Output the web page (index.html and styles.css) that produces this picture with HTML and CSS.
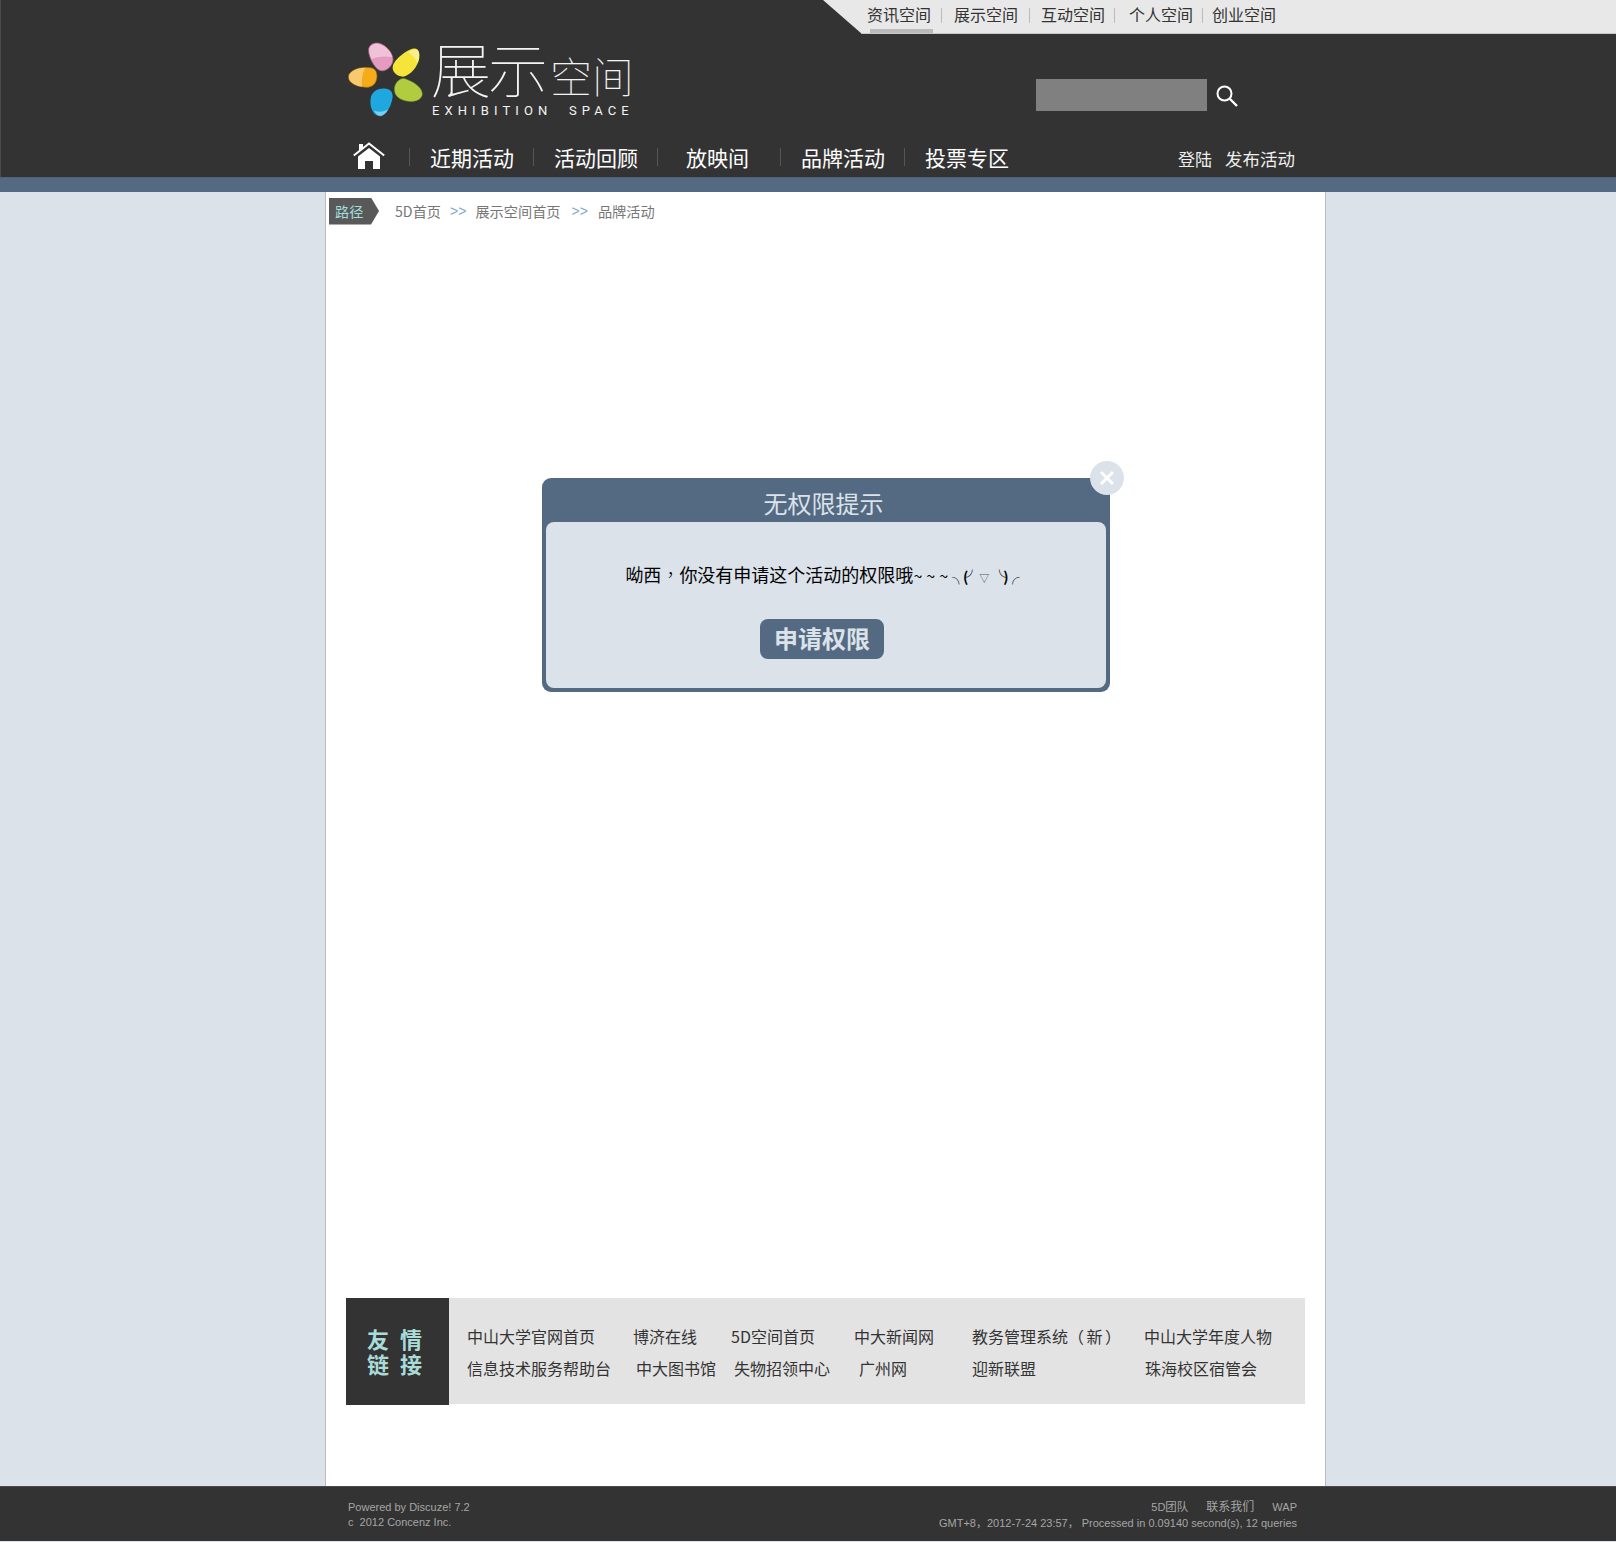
FILE: index.html
```html
<!DOCTYPE html>
<html lang="zh-CN">
<head>
<meta charset="utf-8">
<title>展示空间</title>
<link rel="stylesheet" href="styles.css">
</head>
<body>
<header class="header">
  <div class="topbar">
    <nav class="toplinks">
      <a class="toplink current">资讯空间</a><i class="topsep s1"></i>
      <a class="toplink">展示空间</a><i class="topsep s2"></i>
      <a class="toplink">互动空间</a><i class="topsep s3"></i>
      <a class="toplink">个人空间</a><i class="topsep s4"></i>
      <a class="toplink">创业空间</a>
    </nav>
  </div>
  <div class="brand">
    <div class="logo">
      <svg class="petals" viewBox="27 38 222 221" width="75" height="75" aria-hidden="true">
        <path fill="#e59abf" stroke="#a8648c" stroke-width="2" d="M88 62C88 45 105 37 122 42C145 50 162 75 160 92C158 112 135 127 122 122C108 118 88 85 88 62Z"/>
        <path fill="#f0c2d8" d="M90 62C90 47 105 40 122 44C140 50 154 66 158 82C135 78 110 82 97 88C92 78 90 70 90 62Z"/>
        <path fill="#f5e53b" d="M160 108C165 90 200 60 222 57C236 55 240 70 238 85C235 110 210 138 190 140C172 140 155 125 160 108Z"/>
        <path fill="#f8ef8a" d="M205 68C215 60 232 54 237 68C239 78 236 92 232 100C228 88 218 76 205 68Z"/>
        <path fill="#f5ab1a" stroke="#7a5a20" stroke-width="2" d="M28 138C32 122 60 110 90 113C108 114 113 125 113 140C112 160 100 172 80 172C55 170 25 160 28 138Z"/>
        <path fill="#f8c96f" d="M30 138C34 124 55 114 78 114C70 130 66 150 68 170C50 166 27 156 30 138Z"/>
        <path fill="#b2cc3f" stroke="#6f8a2a" stroke-width="1.5" d="M165 170C170 152 185 143 195 146C215 152 248 170 247 192C246 208 225 216 205 213C185 210 160 200 165 170Z"/>
        <path fill="#1fa7df" d="M94 205C96 185 115 173 135 175C152 176 160 185 159 200C157 220 145 250 125 257C105 260 90 235 94 205Z"/>
        <path fill="#7fcdec" d="M104 240C118 246 132 246 146 236C140 248 133 254 125 256C116 257 109 250 104 240Z"/>
      </svg>
      <div class="wordmark">
        <div class="wordmark-cn"><span class="wm-big">展示</span><span class="wm-small">空间</span></div>
        <div class="wordmark-en">EXHIBITION&nbsp;&nbsp;SPACE</div>
      </div>
    </div>
    <div class="search">
      <div class="search-box"></div>
      <svg class="search-icon" viewBox="0 0 22 22" width="22" height="22" aria-hidden="true">
        <circle cx="8.5" cy="8.5" r="7" fill="none" stroke="#fff" stroke-width="2"/>
        <path d="M13.5 13.5L21 21" stroke="#fff" stroke-width="2.4" fill="none"/>
      </svg>
    </div>
  </div>
  <nav class="nav">
    <a class="home" aria-label="首页">
      <svg viewBox="0 0 32 27" width="32" height="27" aria-hidden="true">
        <path d="M0.8 13.5L16 1.5L31.2 13.5" fill="none" stroke="#fff" stroke-width="2"/>
        <path d="M5 14.5L16 6L27 14.5V27H20V19H12V27H5Z" fill="#fff"/>
        <path d="M6 2H10V5.5L6 8.5Z" fill="#fff"/>
      </svg>
    </a>
    <i class="navsep"></i>
    <a class="navitem">近期活动</a><i class="navsep"></i>
    <a class="navitem">活动回顾</a><i class="navsep"></i>
    <a class="navitem spaced">放映间</a><i class="navsep"></i>
    <a class="navitem">品牌活动</a><i class="navsep"></i>
    <a class="navitem">投票专区</a>
    <div class="navuser"><a class="login">登陆</a><a>发布活动</a></div>
  </nav>
  <div class="strip"></div>
</header>
<main class="main">
  <div class="crumbs">
    <span class="crumb-tag">路径</span>
    <a class="crumb first">5D首页</a><span class="crumb-arrow">&gt;&gt;</span>
    <a class="crumb">展示空间首页</a><span class="crumb-arrow later">&gt;&gt;</span>
    <a class="crumb">品牌活动</a>
  </div>
  <section class="dialog">
    <button class="dialog-close" aria-label="关闭">
      <svg viewBox="0 0 16 16" width="16" height="16" aria-hidden="true"><path d="M2 2L14 14M14 2L2 14" stroke="#fff" stroke-width="3"/></svg>
    </button>
    <h2 class="dialog-title">无权限提示</h2>
    <div class="dialog-body">
      <p class="dialog-msg">呦西<span class="tc comma" lang="zh-TW">，</span>你没有申请这个活动的权限哦<span class="tilde">~~~</span><span class="kao">╮(╯<span class="kao-tri">▽</span>╰)╭</span></p>
      <a class="dialog-btn">申请权限</a>
    </div>
  </section>
  <section class="links">
    <h3 class="links-head">友 情<br>链 接</h3>
    <div class="links-grid">
      <a>中山大学官网首页</a><a>博济在线</a><a>5D空间首页</a><a>中大新闻网</a><a>教务管理系统<span class="tc paren" lang="zh-TW">（新）</span></a><a>中山大学年度人物</a>
      <a>信息技术服务帮助台</a><a class="nudge">中大图书馆</a><a class="nudge">失物招领中心</a><a class="nudge-more">广州网</a><a>迎新联盟</a><a class="nudge-less">珠海校区宿管会</a>
    </div>
  </section>
</main>
<footer class="footer">
  <div class="foot-left">
    <div>Powered by Discuze! 7.2</div>
    <div>c&nbsp;&nbsp;2012 Concenz Inc.</div>
  </div>
  <div class="foot-right">
    <div class="foot-links"><a>5D<span class="foot-cjk tight">团队</span></a><a class="foot-cjk">联系我们</a><a>WAP</a></div>
    <div>GMT+8，2012-7-24 23:57， Processed in 0.09140 second(s), 12 queries</div>
  </div>
</footer>
</body>
</html>
```
FILE: styles.css
```css
* { box-sizing: border-box; }
html, body { margin: 0; padding: 0; }
body {
  background: #dbe2ea;
  font-family: "Noto Sans CJK SC", "Liberation Sans", sans-serif;
  color: #333;
}
a { color: inherit; text-decoration: none; }
.tc { font-family: "Noto Sans CJK TC", "Noto Sans CJK SC", sans-serif; text-spacing-trim: space-all; }
.comma { font-weight: 300; }
.paren { letter-spacing: 2.5px; }

.header { background: #333; border-left: 1px solid #4a4a4a; }

.topbar {
  height: 34px;
  margin-left: 822px;
  padding-left: 44px;
  background: #e8e8e8;
  border-bottom: 1px solid #c8c8c8;
  clip-path: polygon(0 0, 100% 0, 100% 100%, 39px 100%);
}
.toplinks { display: flex; align-items: center; height: 33px; font-size: 16px; color: #333; }
.toplink { position: relative; width: 64px; height: 33px; line-height: 28px; white-space: nowrap; }
.toplink.current::after {
  content: "";
  position: absolute;
  left: 3px; right: -2px; bottom: 0;
  height: 4px;
  background: #bbb;
}
.topsep { width: 1px; height: 15px; margin-top: -3px; background: #bbb; }
.s1 { margin-left: 10px; margin-right: 12px; }
.s2 { margin-left: 11px; margin-right: 11px; }
.s3 { margin-left: 9px; margin-right: 14px; }
.s4 { margin-left: 9px; margin-right: 9px; }

.brand { display: flex; height: 101px; padding-left: 347px; }
.logo { display: flex; width: 688px; padding-top: 8px; }
.petals { flex: none; }
.wordmark { margin-left: 8px; color: #f4f4f4; }
.wordmark-cn { display: flex; align-items: baseline; height: 52px; margin-top: -5px; line-height: 52px; font-weight: 100; white-space: nowrap; }
.wm-big { font-size: 60px; letter-spacing: -3px; line-height: 1; }
.wm-small { font-size: 42px; margin-left: 5px; line-height: 1; }
.wordmark-en { font-family: "Roboto", "Liberation Sans", sans-serif; font-size: 13px; line-height: 15px; letter-spacing: 5.1px; margin-top: 14px; padding-left: 1px; white-space: nowrap; }

.search { display: flex; align-items: flex-start; padding-top: 45px; }
.search-box { width: 171px; height: 32px; background: #808080; }
.search-icon { margin: 6px 0 0 9px; }

.nav { display: flex; align-items: center; height: 42px; padding: 2px 0 0 351px; color: #fff; font-size: 21px; white-space: nowrap; }
.home { width: 56px; height: 27px; margin-top: -3px; margin-left: 1px; }
.navsep { width: 1px; height: 18px; background: #555; }
.navitem { margin: 0 19px 0 20px; }
.navitem.spaced { margin: 0 31px 0 28px; }
.navuser { display: flex; gap: 13px; margin-top: 2px; margin-left: 150px; font-size: 17.5px; color: #eee; }
.login { font-size: 17px; }

.strip { height: 15px; margin-left: -1px; background: #546a82; border-top: 1px solid #4c6077; }

.main {
  width: 1001px;
  height: 1294px;
  margin-left: 325px;
  background: #fff;
  border-left: 1px solid #bdbdbd;
  border-right: 1px solid #bdbdbd;
}

.crumbs { display: flex; align-items: center; height: 40px; padding: 0 0 2px 3px; font-size: 14.2px; color: #777; white-space: nowrap; }
.crumb-tag {
  width: 50px;
  height: 27px;
  padding-left: 6px;
  line-height: 26px;
  color: #a2dede;
  background: #595959;
  clip-path: polygon(0 0, 84% 0, 100% 50%, 84% 100%, 0 100%);
}
.crumb.first { margin-left: 16px; }
.crumb-arrow { color: #86a9c4; margin: 0 9px 0 9px; font-size: 14px; font-family: "Liberation Sans", sans-serif; }
.crumb-arrow.later { margin: 0 10px 0 11px; }

.dialog {
  position: relative;
  width: 568px;
  height: 214px;
  margin: 246px 0 0 216px;
  padding: 0 4px 4px;
  background: #546a82;
  border-radius: 9px;
}
.dialog-close {
  position: absolute;
  top: -17px;
  right: -14px;
  width: 34px;
  height: 34px;
  padding: 0;
  border: 0;
  border-radius: 50%;
  background: #dbe2ea;
  display: flex;
  align-items: center;
  justify-content: center;
}
.dialog-title { margin: 0 0 0 -5px; height: 44px; padding-top: 7px; font-size: 24px; line-height: 36px; font-weight: 400; color: #dbe2ea; text-align: center; }
.dialog-body { height: 166px; padding-top: 35px; background: #dbe2ea; border-radius: 8px; display: flex; flex-direction: column; align-items: center; }
.dialog-msg { height: 34px; margin: 0 0 0 -10px; font-size: 18px; line-height: 34px; color: #000; white-space: nowrap; }
.tilde { font-size: 16px; letter-spacing: 4px; }
.kao { font-size: 14px; letter-spacing: -3px; font-weight: 700; }
.kao-tri { font-size: 10px; font-weight: 400; letter-spacing: 0; padding: 0 3px 0 3px; color: #555; }
.dialog-btn { width: 124px; height: 40px; margin: 28px 0 0 -8px; background: #546a82; color: #dbe2ea; border-radius: 8px; font-size: 24px; line-height: 38px; font-weight: 700; text-align: center; }

.links { display: flex; width: 959px; height: 106px; margin: 606px 0 0 20px; background: #e3e3e3; }
.links-head { width: 103px; height: 107px; margin: 0; padding: 28px 0 0 21px; background: #333; color: #a9dcd9; font-size: 22px; line-height: 25px; font-weight: 700; word-spacing: 6px; }
.links-grid {
  display: grid;
  grid-template-columns: 166px 98px 123px 118px 172px auto;
  grid-auto-rows: 32px;
  align-items: center;
  padding: 22px 0 0 18px;
  font-size: 16px;
  color: #333;
  white-space: nowrap;
}
.links-grid .nudge { padding-left: 3px; }
.links-grid .nudge-more { padding-left: 5px; }
.links-grid .nudge-less { padding-left: 1px; }

.footer {
  display: flex;
  justify-content: space-between;
  height: 55px;
  padding: 13px 319px 0 348px;
  background: #333;
  border-top: 1px solid #4a4a4a;
  font-family: "Liberation Sans", "Noto Sans CJK SC", sans-serif;
  font-size: 11px;
  line-height: 15px;
  color: #a6a6a6;
}
.foot-right { text-align: right; font-size: 11px; }
.foot-links { display: flex; justify-content: flex-end; gap: 18px; margin-bottom: 1px; }
.foot-cjk { font-size: 12px; }
.foot-cjk.tight { font-size: 11.5px; }
```
